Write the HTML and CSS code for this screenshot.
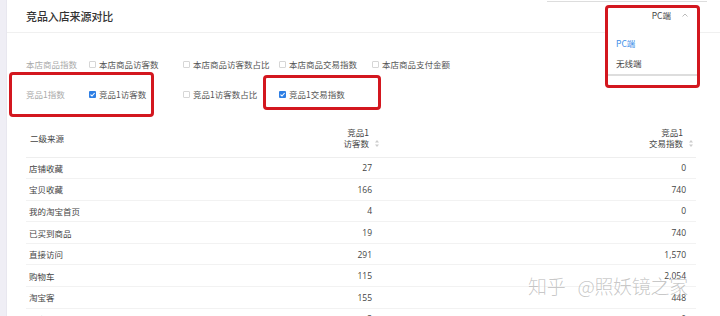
FILE: index.html
```html
<!DOCTYPE html>
<html lang="zh-CN">
<head>
  <meta charset="UTF-8" />
  <meta name="viewport" content="width=device-width, initial-scale=1.0"/>
  <title>竞品入店来源对比</title>
  <link rel="stylesheet" href="styles.css">
</head>
<body>
  <div class="page">
    <aside class="side"></aside>

    <main class="panel">
      <header class="panel-head">
        <h2 class="panel-title">竞品入店来源对比</h2>
        <div class="terminal">
          <div class="terminal-value">
            <span>PC端</span>
            <svg class="caret" width="6" height="4" viewBox="0 0 6 4"><polyline points="0.5,3.5 3,1 5.5,3.5" fill="none" stroke="#bbb" stroke-width="1"/></svg>
          </div>
          <ul class="terminal-menu">
            <li class="active">PC端</li>
            <li>无线端</li>
          </ul>
        </div>
      </header>

      <div class="filters">
        <div class="filter-row">
          <span class="filter-label">本店商品指数</span>
          <label class="check"><span class="box"></span>本店商品访客数</label>
          <label class="check"><span class="box"></span>本店商品访客数占比</label>
          <label class="check"><span class="box"></span>本店商品交易指数</label>
          <label class="check"><span class="box"></span>本店商品支付金额</label>
        </div>
        <div class="filter-row">
          <span class="filter-label">竞品1指数</span>
          <label class="check"><span class="box checked"><svg width="7" height="7" viewBox="0 0 7 7"><polyline points="1.5,3.6 3,5 5.6,2" fill="none" stroke="#fff" stroke-width="1.1"/></svg></span>竞品1访客数</label>
          <label class="check"><span class="box"></span>竞品1访客数占比</label>
          <label class="check"><span class="box checked"><svg width="7" height="7" viewBox="0 0 7 7"><polyline points="1.5,3.6 3,5 5.6,2" fill="none" stroke="#fff" stroke-width="1.1"/></svg></span>竞品1交易指数</label>
        </div>
      </div>

      <table class="source-table">
        <colgroup>
          <col class="col-name">
          <col class="col-visit">
          <col class="col-trade">
        </colgroup>
        <thead>
          <tr>
            <th class="th-name">二级来源</th>
            <th class="th-num">
              <span class="th-wrap"><span>竞品1<br>访客数</span><svg class="sorter" width="4" height="7" viewBox="0 0 4 7"><polygon points="2,0 4,2.5 0,2.5" fill="#ccc"/><polygon points="0,4.5 4,4.5 2,7" fill="#ccc"/></svg></span>
            </th>
            <th class="th-num">
              <span class="th-wrap"><span>竞品1<br>交易指数</span><svg class="sorter" width="4" height="7" viewBox="0 0 4 7"><polygon points="2,0 4,2.5 0,2.5" fill="#ccc"/><polygon points="0,4.5 4,4.5 2,7" fill="#ccc"/></svg></span>
            </th>
          </tr>
        </thead>
        <tbody>
          <tr><td>店铺收藏</td><td class="num">27</td><td class="num">0</td></tr>
          <tr><td>宝贝收藏</td><td class="num">166</td><td class="num">740</td></tr>
          <tr><td>我的淘宝首页</td><td class="num">4</td><td class="num">0</td></tr>
          <tr><td>已买到商品</td><td class="num">19</td><td class="num">740</td></tr>
          <tr><td>直接访问</td><td class="num">291</td><td class="num">1,570</td></tr>
          <tr><td>购物车</td><td class="num">115</td><td class="num">2,054</td></tr>
          <tr><td>淘宝客</td><td class="num">155</td><td class="num">448</td></tr>
          <tr><td>其它来源</td><td class="num">3</td><td class="num">0</td></tr>
        </tbody>
      </table>
    </main>

    <div class="top-edge"></div>
    <div class="mark mark-index"></div>
    <div class="mark mark-trade"></div>
    <div class="mark mark-terminal"></div>
    <div class="watermark"><span>知乎</span><span>@照妖镜之家</span></div>
  </div>
</body>
</html>
```

FILE: styles.css
```css
* {
  box-sizing: border-box;
}

html, body {
  height: 100%;
  margin: 0;
  overflow: hidden;
  background: #fff;
  font-family: "Noto Sans CJK SC", "Liberation Sans", sans-serif;
  color: #444;
}

.page {
  position: relative;
  display: flex;
  height: 316px;
}

.side {
  width: 7px;
  flex-shrink: 0;
  background: #efeef5;
  border-right: 1px solid #e8e7ef;
}

.panel {
  flex: 1;
  padding-right: 23px;
}

/* title bar */
.panel-head {
  height: 33px;
  display: flex;
  align-items: center;
  justify-content: space-between;
  padding-left: 19px;
  border-bottom: 1px solid #f0f0f0;
  margin-right: -23px;
  padding-right: 23px;
}

.panel-title {
  margin: 0;
  font-size: 11px;
  font-weight: 500;
  color: #333;
  letter-spacing: -0.1px;
  padding-bottom: 1px;
}

.terminal {
  position: relative;
  width: 91px;
  align-self: stretch;
}

.terminal-value {
  display: flex;
  justify-content: flex-end;
  align-items: center;
  gap: 11px;
  height: 100%;
  padding-right: 9px;
  padding-bottom: 2px;
  font-size: 8.5px;
  color: #444;
}

.terminal-menu {
  position: absolute;
  top: 31px;
  left: 0;
  width: 91px;
  margin: 0;
  padding: 2px 0 1px;
  list-style: none;
  background: #fff;
  border-bottom: 2px solid #ddd;
  z-index: 2;
}

.terminal-menu li {
  height: 20px;
  line-height: 20px;
  padding-left: 10px;
  font-size: 8.5px;
  color: #444;
}

.terminal-menu li.active {
  color: #3d8ee8;
}

/* metric filters */
.filters {
  padding: 16px 0 0 19px;
}

.filter-row {
  display: grid;
  grid-template-columns: 63px 94px 96px 93px auto;
  align-items: center;
  height: 30px;
}

.filter-label {
  font-size: 8.5px;
  color: #aaa;
}

.check {
  display: flex;
  align-items: center;
  gap: 3px;
  font-size: 8.5px;
  color: #555;
  white-space: nowrap;
}

.box {
  width: 7px;
  height: 7px;
  border: 1px solid #d6d6d6;
  border-radius: 1px;
  background: #fff;
  display: flex;
}

.box.checked {
  border: none;
  background: #2f7fe4;
}

/* table */
.source-table {
  width: 670px;
  margin: 10px 0 0 19px;
  border-collapse: collapse;
  table-layout: fixed;
  font-size: 8.5px;
  color: #444;
}

.col-name { width: 199px; }
.col-visit { width: 157px; }
.col-trade { width: 314px; }

.source-table th {
  height: 38px;
  font-weight: 400;
  border-bottom: 1px solid #eee;
  padding: 0;
}

.th-name {
  text-align: left;
  padding-left: 4px !important;
}

.th-num {
  text-align: right;
  padding-right: 3px !important;
  line-height: 10.5px;
}

.th-wrap {
  display: inline-flex;
  align-items: flex-end;
  gap: 6px;
}

.sorter {
  margin-bottom: 1px;
}

.source-table td {
  height: 21.6px;
  padding: 0 0 0 3px;
  border-bottom: 1px solid #f2f2f2;
}

.source-table td.num {
  text-align: right;
  padding-right: 10px;
  font-family: "Open Sans", "Liberation Sans", sans-serif;
  font-size: 8.5px;
}

/* overlays */
.top-edge {
  position: absolute;
  top: 0;
  left: 547px;
  width: 160px;
  height: 2px;
  border-bottom: 1px solid #ddd;
}

.mark {
  position: absolute;
  border: 3px solid #d3171f;
  border-radius: 4px;
  z-index: 3;
}

.mark-index {
  left: 9px;
  top: 72px;
  width: 145px;
  height: 45px;
}

.mark-trade {
  left: 263px;
  top: 75px;
  width: 118px;
  height: 35px;
}

.mark-terminal {
  left: 605px;
  top: 5px;
  width: 95px;
  height: 83px;
}

.watermark {
  position: absolute;
  left: 528px;
  top: 273px;
  display: flex;
  gap: 12px;
  font-size: 19px;
  font-weight: 300;
  line-height: 26px;
  letter-spacing: -0.3px;
  color: rgba(120, 120, 120, 0.42);
  text-shadow: 0 0 2px #fff;
  z-index: 4;
}
```
